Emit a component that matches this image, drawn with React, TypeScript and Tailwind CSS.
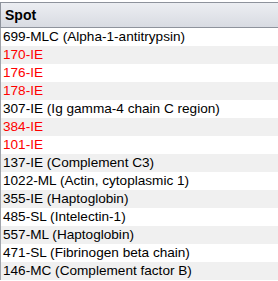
const rows = [
  { label: "699-MLC (Alpha-1-antitrypsin)", red: false },
  { label: "170-IE", red: true },
  { label: "176-IE", red: true },
  { label: "178-IE", red: true },
  { label: "307-IE (Ig gamma-4 chain C region)", red: false },
  { label: "384-IE", red: true },
  { label: "101-IE", red: true },
  { label: "137-IE (Complement C3)", red: false },
  { label: "1022-ML (Actin, cytoplasmic 1)", red: false },
  { label: "355-IE (Haptoglobin)", red: false },
  { label: "485-SL (Intelectin-1)", red: false },
  { label: "557-ML (Haptoglobin)", red: false },
  { label: "471-SL (Fibrinogen beta chain)", red: false },
  { label: "146-MC (Complement factor B)", red: false },
];

export default function App() {
  return (
    <div className="w-[278px] h-[281px] overflow-hidden bg-white pt-[2px] font-['Liberation_Sans',Arial,sans-serif]">
      <div className="h-[26px] border-t border-b border-l border-[#8e939c] bg-gradient-to-b from-[#eceef2] to-[#d8dbe2] flex items-center pl-[4px]">
        <span className="text-[14px] font-bold text-black">Spot</span>
      </div>
      <div className="border-l border-[#a0a4ab]">
        {rows.map((row, i) => (
          <div
            key={row.label}
            className={`h-[18px] flex items-center pl-[2px] text-[13.6px] whitespace-nowrap ${
              i % 2 === 1 ? "bg-[#f0f0f0]" : "bg-white"
            } ${row.red ? "text-[#ff0000]" : "text-black"}`}
          >
            {row.label}
          </div>
        ))}
      </div>
    </div>
  );
}
